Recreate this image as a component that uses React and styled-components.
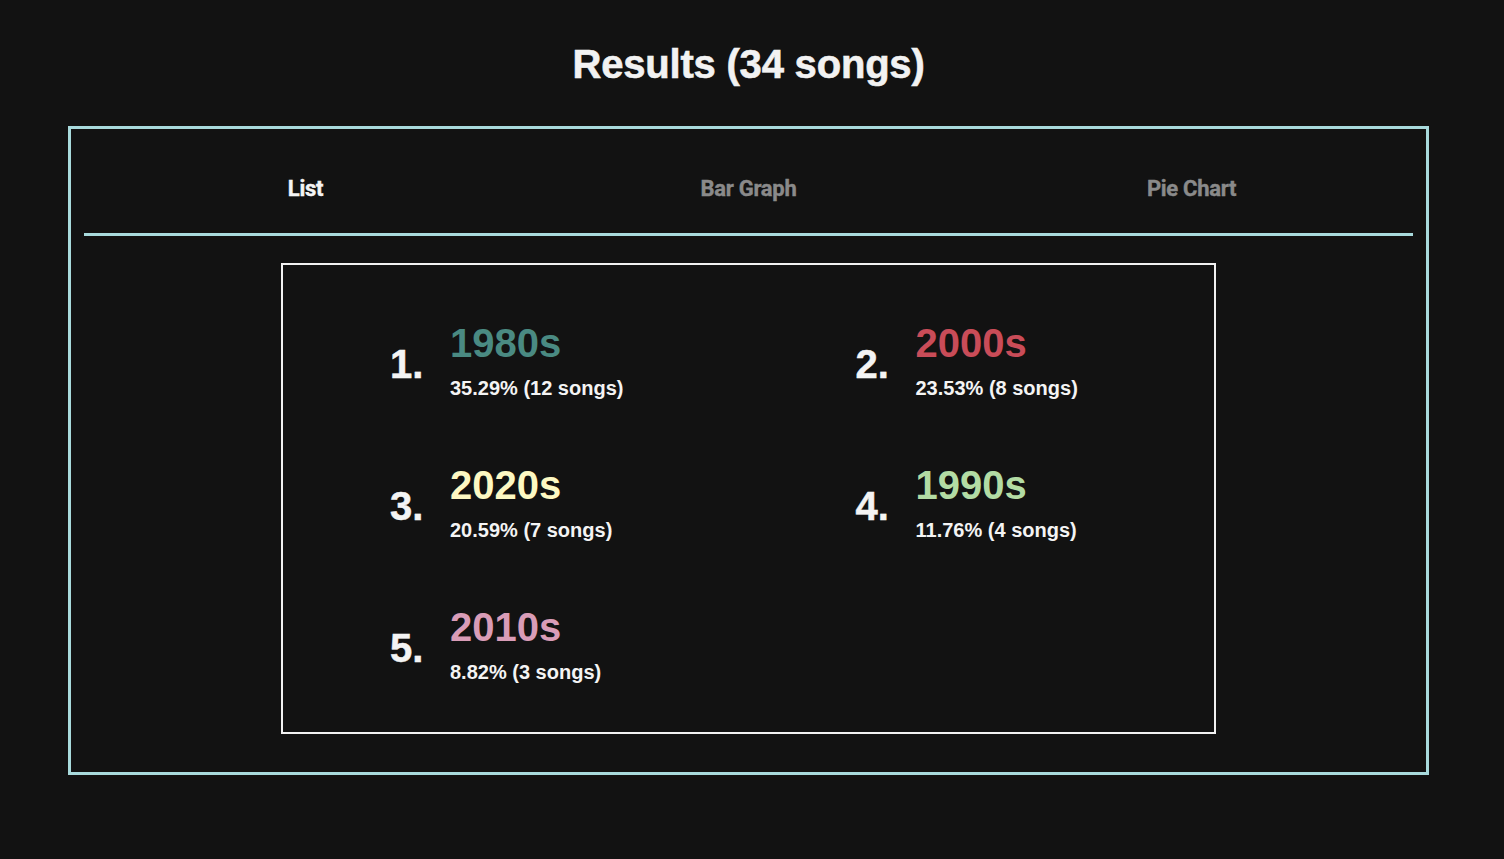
import React, { useState } from "react";
import styled, { createGlobalStyle } from "styled-components";

const GlobalStyle = createGlobalStyle`
  html, body {
    margin: 0;
    padding: 0;
    background: #121212;
  }
  body {
    font-family: "Liberation Sans", Arial, sans-serif;
    color: #f2f2f2;
  }
`;

const Page = styled.div`
  min-height: 859px;
  padding: 41px 75px 0 68px;
  box-sizing: border-box;
`;

const Title = styled.h1`
  margin: 0 0 39px;
  text-align: center;
  font-size: 40px;
  line-height: 46px;
  font-weight: bold;
  letter-spacing: -0.2px;
  -webkit-text-stroke: 0.6px #f2f2f2;
  color: #f2f2f2;
`;

const Panel = styled.section`
  width: 1361px;
  box-sizing: border-box;
  border: 3px solid #a8dadc;
  padding: 0 13px 38px;
`;

const Tabs = styled.nav`
  display: grid;
  grid-template-columns: repeat(3, 1fr);
  border-bottom: 3px solid #a8dadc;
  margin-bottom: 27px;
`;

const Tab = styled.button`
  background: none;
  border: none;
  padding: 47px 0 32px;
  font-family: Roboto, "Liberation Sans", sans-serif;
  font-size: 22px;
  line-height: 25px;
  font-weight: bold;
  letter-spacing: -0.3px;
  color: ${(p) => (p.$active ? "#f4f4f4" : "#8a8a8a")};
  -webkit-text-stroke: 0.4px ${(p) => (p.$active ? "#f4f4f4" : "#8a8a8a")};
  cursor: pointer;
`;

const ListBox = styled.div`
  width: 935px;
  margin: 0 auto;
  box-sizing: border-box;
  border: 2px solid #f2f2f2;
  padding: 55px 0 48px;
  display: grid;
  grid-template-columns: 1fr 1fr;
  row-gap: 62px;
`;

const Item = styled.div`
  display: flex;
  align-items: center;
  padding-left: 107px;
`;

const Rank = styled.span`
  width: 60px;
  font-size: 40px;
  line-height: 44px;
  font-weight: bold;
  color: #f4f4f4;
  -webkit-text-stroke: 0.5px #f4f4f4;
  padding-top: 7px;
`;

const Info = styled.div`
  display: flex;
  flex-direction: column;
`;

const Decade = styled.span`
  font-size: 40px;
  line-height: 46px;
  font-weight: bold;
  color: ${(p) => p.$color};
`;

const Share = styled.span`
  margin-top: 11px;
  font-size: 20px;
  line-height: 23px;
  font-weight: bold;
  color: #f4f4f4;
`;

const results = [
  { decade: "1980s", pct: "35.29%", songs: 12, color: "#4a8a82" },
  { decade: "2000s", pct: "23.53%", songs: 8, color: "#c94c58" },
  { decade: "2020s", pct: "20.59%", songs: 7, color: "#fdf8c2" },
  { decade: "1990s", pct: "11.76%", songs: 4, color: "#b3dca4" },
  { decade: "2010s", pct: "8.82%", songs: 3, color: "#d99cb7" },
];

export default function App() {
  const [tab, setTab] = useState("List");
  const total = results.reduce((n, r) => n + r.songs, 0);

  return (
    <Page>
      <GlobalStyle />
      <Title>Results ({total} songs)</Title>
      <Panel>
        <Tabs>
          {["List", "Bar Graph", "Pie Chart"].map((t) => (
            <Tab key={t} $active={tab === t} onClick={() => setTab(t)}>
              {t}
            </Tab>
          ))}
        </Tabs>
        <ListBox>
          {results.map((r, i) => (
            <Item key={r.decade}>
              <Rank>{i + 1}.</Rank>
              <Info>
                <Decade $color={r.color}>{r.decade}</Decade>
                <Share>
                  {r.pct} ({r.songs} songs)
                </Share>
              </Info>
            </Item>
          ))}
        </ListBox>
      </Panel>
    </Page>
  );
}
